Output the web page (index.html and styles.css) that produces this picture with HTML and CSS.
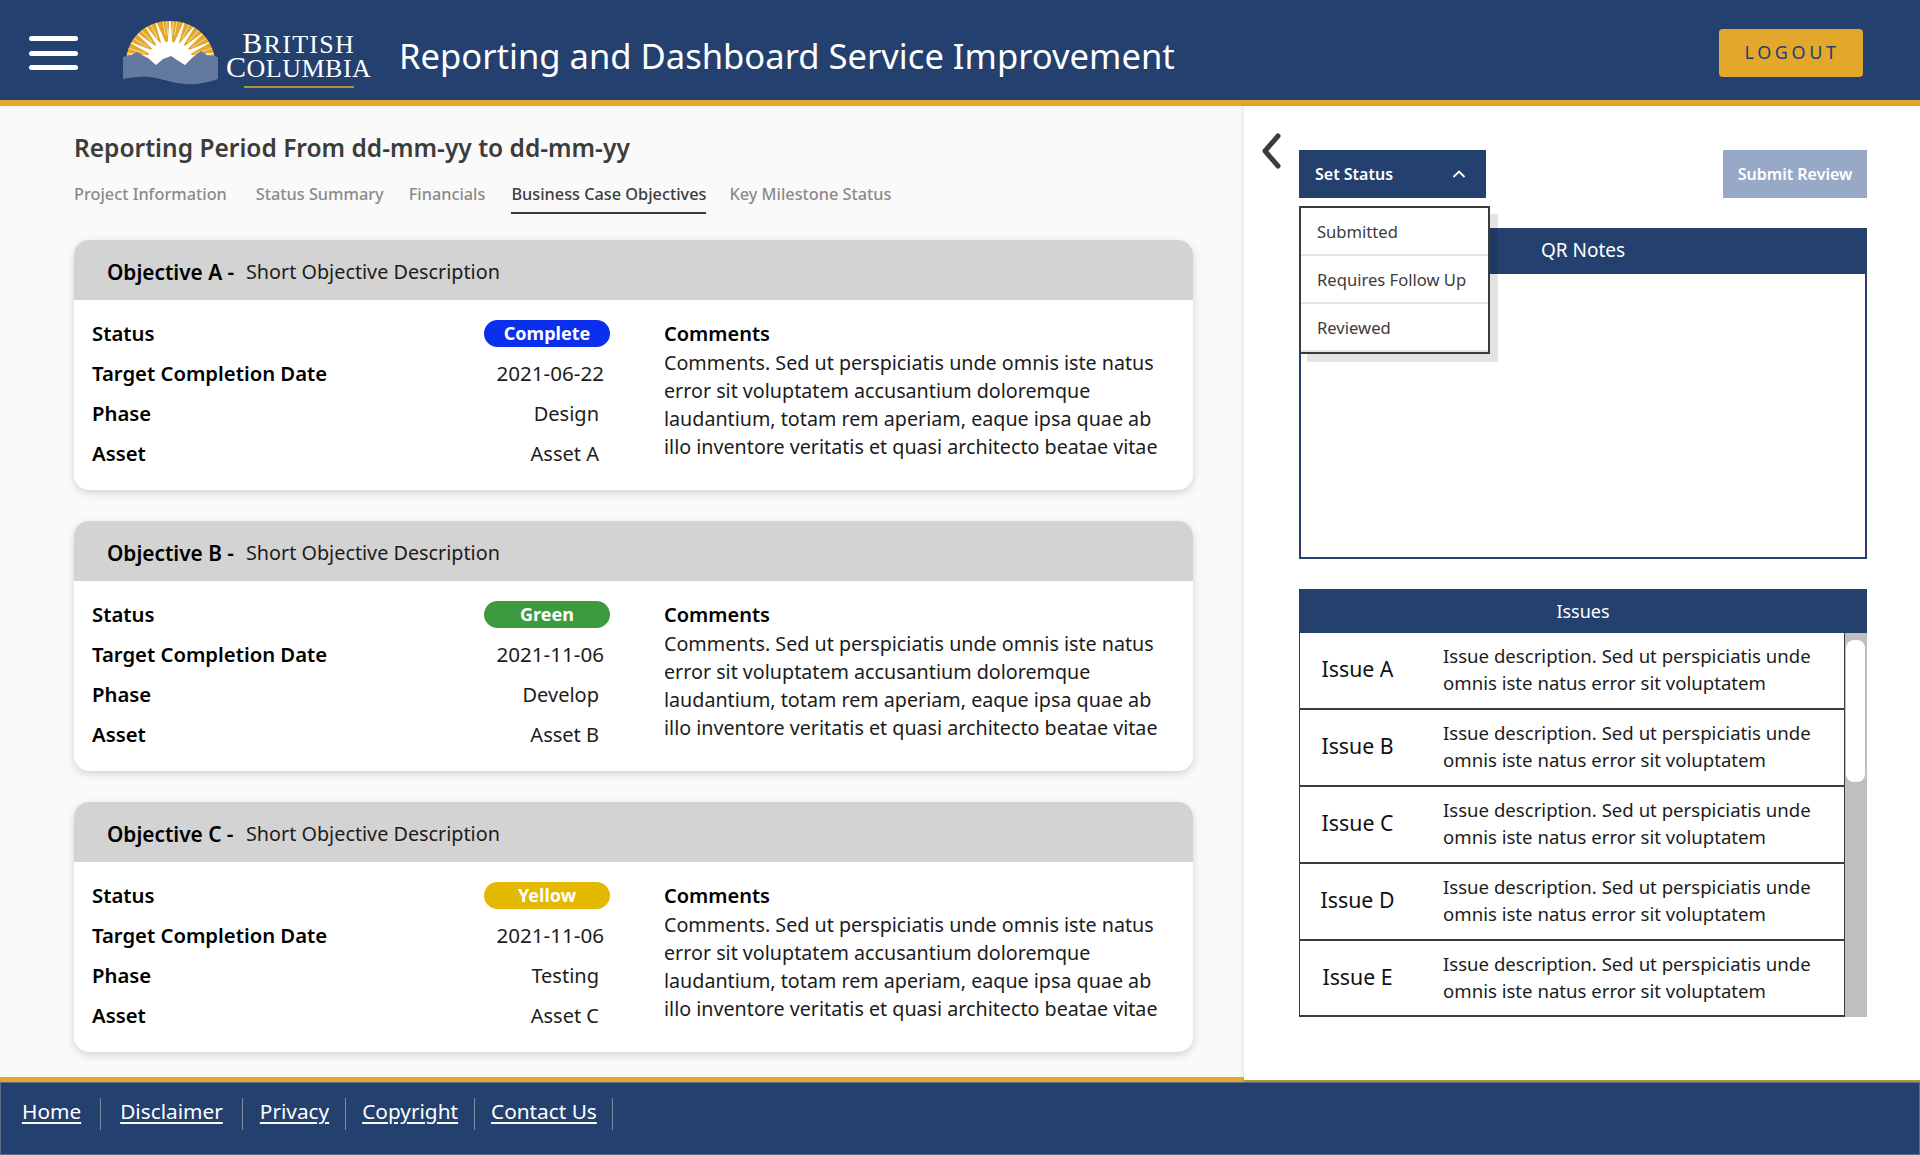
FILE: index.html
```html
<!DOCTYPE html>
<html lang="en">
<head>
<meta charset="utf-8">
<title>Reporting and Dashboard Service Improvement</title>
<link rel="stylesheet" href="styles.css">
</head>
<body>
<header class="topbar">
  <button class="burger" aria-label="Menu"><span></span><span></span><span></span></button>
  <div class="logo">
    <svg class="logo-mark" viewBox="0 0 95 64" width="95" height="64">
      <defs>
        <clipPath id="dome"><path d="M3 37 C7 13 25 0 47 0 C69 0 87 13 92 37 Z"/></clipPath>
        <path id="ray" d="M14 -2.6 L46 -0.25 L46 0.25 L14 2.6 Z" fill="#fff"/>
        <path id="fine" d="M26 -0.35 L50 -0.35 L50 0.35 L26 0.35 Z" fill="#fff" opacity=".75"/>
      </defs>
      <path d="M3 37 C7 13 25 0 47 0 C69 0 87 13 92 37 Z" fill="#e3a82b"/>
      <g clip-path="url(#dome)">
        <g transform="translate(47 40)">
          <use href="#ray" transform="rotate(-170)"/><use href="#ray" transform="rotate(-155)"/><use href="#ray" transform="rotate(-140)"/><use href="#ray" transform="rotate(-125)"/><use href="#ray" transform="rotate(-110)"/><use href="#ray" transform="rotate(-90)"/><use href="#ray" transform="rotate(-70)"/><use href="#ray" transform="rotate(-55)"/><use href="#ray" transform="rotate(-40)"/><use href="#ray" transform="rotate(-25)"/><use href="#ray" transform="rotate(-10)"/>
          <use href="#fine" transform="rotate(-163)"/><use href="#fine" transform="rotate(-148)"/><use href="#fine" transform="rotate(-133)"/><use href="#fine" transform="rotate(-118)"/><use href="#fine" transform="rotate(-100)"/><use href="#fine" transform="rotate(-95)"/><use href="#fine" transform="rotate(-85)"/><use href="#fine" transform="rotate(-80)"/><use href="#fine" transform="rotate(-62)"/><use href="#fine" transform="rotate(-47)"/><use href="#fine" transform="rotate(-32)"/><use href="#fine" transform="rotate(-17)"/>
        </g>
      </g>
      <path d="M25 38 C25 27 35 21 47 21 C59 21 69 27 69 38 L69 46 L25 46 Z" fill="#fff"/>
      <path d="M0 36 L8 34 L14 31 L19 34 L25 37 L33 44 L40 38 L48 35 L54 39 L62 44 L70 36 L78 30 L84 34 L95 36 L95 58 C84 62 72 64 62 63 C48 62 38 57 26 56 C16 55 8 57 0 58 Z" fill="#64799f"/>
    </svg>
    <div class="logo-word">
      <span class="logo-l1"><span class="cap">B</span>RITISH</span>
      <span class="logo-l2"><span class="cap">C</span>OLUMBIA</span>
      <span class="logo-rule"></span>
    </div>
  </div>
  <h1 class="app-title">Reporting and Dashboard Service Improvement</h1>
  <button class="logout">LOGOUT</button>
</header>

<div class="main">
  <main class="left">
    <h2 class="period">Reporting Period From dd-mm-yy to dd-mm-yy</h2>
    <nav class="tabs">
      <a class="tab t1">Project Information</a>
      <a class="tab t2">Status Summary</a>
      <a class="tab t3">Financials</a>
      <a class="tab active t4">Business Case Objectives</a>
      <a class="tab">Key Milestone Status</a>
    </nav>

    <section class="card">
      <div class="card-head"><b>Objective A -</b><span>Short Objective Description</span></div>
      <div class="card-body">
        <dl class="facts">
          <dt>Status</dt><dd class="pill-cell"><span class="pill blue">Complete</span></dd>
          <dt>Target Completion Date</dt><dd class="date">2021-06-22</dd>
          <dt>Phase</dt><dd>Design</dd>
          <dt>Asset</dt><dd>Asset A</dd>
        </dl>
        <div class="comments"><b>Comments</b><p>Comments. Sed ut perspiciatis unde omnis iste natus error sit voluptatem accusantium doloremque laudantium, totam rem aperiam, eaque ipsa quae ab illo inventore veritatis et quasi architecto beatae vitae</p></div>
      </div>
    </section>

    <section class="card">
      <div class="card-head"><b>Objective B -</b><span>Short Objective Description</span></div>
      <div class="card-body">
        <dl class="facts">
          <dt>Status</dt><dd class="pill-cell"><span class="pill green">Green</span></dd>
          <dt>Target Completion Date</dt><dd class="date">2021-11-06</dd>
          <dt>Phase</dt><dd>Develop</dd>
          <dt>Asset</dt><dd>Asset B</dd>
        </dl>
        <div class="comments"><b>Comments</b><p>Comments. Sed ut perspiciatis unde omnis iste natus error sit voluptatem accusantium doloremque laudantium, totam rem aperiam, eaque ipsa quae ab illo inventore veritatis et quasi architecto beatae vitae</p></div>
      </div>
    </section>

    <section class="card">
      <div class="card-head"><b>Objective C -</b><span>Short Objective Description</span></div>
      <div class="card-body">
        <dl class="facts">
          <dt>Status</dt><dd class="pill-cell"><span class="pill yellow">Yellow</span></dd>
          <dt>Target Completion Date</dt><dd class="date">2021-11-06</dd>
          <dt>Phase</dt><dd>Testing</dd>
          <dt>Asset</dt><dd>Asset C</dd>
        </dl>
        <div class="comments"><b>Comments</b><p>Comments. Sed ut perspiciatis unde omnis iste natus error sit voluptatem accusantium doloremque laudantium, totam rem aperiam, eaque ipsa quae ab illo inventore veritatis et quasi architecto beatae vitae</p></div>
      </div>
    </section>
  </main>

  <aside class="right">
    <svg class="back" viewBox="0 0 20 36" width="20" height="36"><path d="M17 3 L4 18 L17 33" fill="none" stroke="#3c3c3c" stroke-width="5" stroke-linecap="round" stroke-linejoin="round"/></svg>
    <div class="right-col">
      <div class="actions">
        <div class="status-wrap">
          <button class="set-status">Set Status
            <svg viewBox="0 0 14 8" width="14" height="8"><path d="M1.5 7 L7 1.5 L12.5 7" fill="none" stroke="#fff" stroke-width="1.8"/></svg>
          </button>
          <ul class="menu">
            <li>Submitted</li>
            <li>Requires Follow Up</li>
            <li>Reviewed</li>
          </ul>
        </div>
        <button class="submit">Submit Review</button>
      </div>
      <section class="notes">
        <h3>QR Notes</h3>
        <div class="notes-body"></div>
      </section>
      <section class="issues">
        <h3>Issues</h3>
        <div class="issue-wrap">
          <div class="issue-list">
            <div class="issue"><div class="issue-name">Issue A</div><p>Issue description. Sed ut perspiciatis unde omnis iste natus error sit voluptatem</p></div>
            <div class="issue"><div class="issue-name">Issue B</div><p>Issue description. Sed ut perspiciatis unde omnis iste natus error sit voluptatem</p></div>
            <div class="issue"><div class="issue-name">Issue C</div><p>Issue description. Sed ut perspiciatis unde omnis iste natus error sit voluptatem</p></div>
            <div class="issue"><div class="issue-name">Issue D</div><p>Issue description. Sed ut perspiciatis unde omnis iste natus error sit voluptatem</p></div>
            <div class="issue"><div class="issue-name">Issue E</div><p>Issue description. Sed ut perspiciatis unde omnis iste natus error sit voluptatem</p></div>
          </div>
          <div class="scrollbar"><div class="thumb"></div></div>
        </div>
      </section>
    </div>
  </aside>
</div>

<footer class="footer">
  <a class="f-home">Home</a><a class="f-disc">Disclaimer</a><a class="f-priv">Privacy</a><a class="f-copy">Copyright</a><a class="f-cont">Contact Us</a>
</footer>
</body>
</html>
```
FILE: styles.css
```css
* { box-sizing: border-box; }
html, body { margin: 0; height: 100%; }
body {
  height: 1155px;
  overflow: hidden;
  display: flex;
  flex-direction: column;
  font-family: "Noto Sans", sans-serif;
  color: #000;
  background: #fafafa;
}
h1, h2, h3, p, ul, dl, dd { margin: 0; padding: 0; }
button { font-family: inherit; border: 0; cursor: pointer; }

.topbar {
  height: 106px;
  flex: none;
  background: #23406f;
  border-bottom: 6px solid #e3a82b;
  display: flex;
  align-items: center;
  padding: 6px 57px 0 29px;
}
.burger {
  width: 49px;
  height: 34px;
  padding: 0;
  background: none;
  display: flex;
  flex-direction: column;
  justify-content: space-between;
  margin-right: 45px;
  flex: none;
}
.burger span { display: block; height: 5px; border-radius: 3px; background: #fff; }
.logo { display: flex; align-items: center; width: 276px; flex: none; }
.logo-mark { flex: none; }
.logo-word {
  margin-left: 8px;
  margin-top: 12px;
  color: #fff;
  font-family: "Liberation Serif", serif;
  display: flex;
  flex-direction: column;
  align-items: center;
}
.logo-l1, .logo-l2 { display: block; line-height: 24px; height: 24px; white-space: nowrap; }
.logo-l1 { font-size: 26px; letter-spacing: 1.3px; }
.logo-l2 { font-size: 26px; letter-spacing: .5px; }
.cap { font-size: 30px; }
.logo-rule { width: 110px; height: 2px; background: #b08f3d; margin-top: 7px; }
.app-title { font-size: 34.6px; font-weight: 400; color: #fff; flex: 1; white-space: nowrap; margin-top: 4px; }
.logout {
  width: 144px;
  height: 48px;
  background: #e3a82b;
  color: #23406f;
  font-size: 18px;
  letter-spacing: 3.6px;
  border-radius: 4px;
  padding: 0 0 2px 2px;
}

.main { flex: 1; display: flex; min-height: 0; }
.left { width: 1244px; flex: none; padding: 26px 51px 0 74px; background: #fafafa; }
.period { font-size: 24.5px; font-weight: 600; color: #3c3c3c; line-height: 32px; }
.tabs { display: flex; margin-top: 15px; margin-bottom: 18px; height: 43px; }
.tab { font-size: 16.3px; font-weight: 500; color: #8a8a8a; line-height: 30px; height: 35px; white-space: nowrap; }
.t1 { margin-right: 29px; }
.t2 { margin-right: 25px; }
.t3 { margin-right: 26px; }
.t4 { margin-right: 23px; }
.tab.active { color: #3c3c3c; border-bottom: 2px solid #3c3c3c; }

.card {
  height: 250px;
  margin-bottom: 31px;
  background: #fff;
  border-radius: 15px;
  box-shadow: 0 3px 8px rgba(0,0,0,.16);
  overflow: hidden;
}
.card-head {
  height: 60px;
  background: #d3d3d3;
  display: flex;
  align-items: center;
  padding: 3px 0 0 33px;
  font-size: 19.8px;
  color: #1c1c1c;
}
.card-head b { font-size: 20.8px; font-weight: 600; color: #000; width: 139px; flex: none; }
.card-body { display: flex; padding: 13px 30px 0 18px; }
.facts {
  width: 572px;
  flex: none;
  display: grid;
  grid-template-columns: 1fr auto;
  grid-auto-rows: 40px;
  align-items: center;
  font-size: 20px;
}
.facts dt { font-weight: 600; font-size: 20.3px; }
.facts dd { justify-self: end; padding-right: 65px; color: #1c1c1c; }
.facts .date { padding-right: 60px; font-size: 20.6px; }
.facts .pill-cell { padding-right: 54px; }
.pill {
  display: flex;
  align-items: center;
  justify-content: center;
  width: 126px;
  height: 27px;
  border-radius: 14px;
  color: #fff;
  font-size: 18px;
  font-weight: 700;
}
.blue { background: #0a30ee; }
.green { background: #3e9a3e; }
.yellow { background: #e3b800; }
.comments { flex: 1; font-size: 19.7px; line-height: 28px; color: #1c1c1c; padding-top: 7px; }
.comments b { font-size: 20px; font-weight: 600; color: #000; display: block; margin-bottom: 1px; }

.right {
  flex: 1;
  background: #fff;
  display: flex;
  box-shadow: -2px 0 4px rgba(0,0,0,.08), 0 2px 0 #c4962a;
  position: relative;
  z-index: 1;
  margin-bottom: -3px;
  padding: 44px 53px 0 17px;
}
.back { flex: none; margin-top: -17px; margin-left: 0; }
.right-col { margin-left: 18px; flex: 1; display: flex; flex-direction: column; }
.actions { display: flex; justify-content: space-between; height: 48px; }
.status-wrap { position: relative; }
.set-status {
  width: 187px;
  height: 48px;
  background: #23406f;
  color: #fff;
  font-size: 16px;
  font-weight: 600;
  display: flex;
  align-items: center;
  justify-content: space-between;
  padding: 0 20px 0 16px;
}
.menu {
  position: absolute;
  left: 0;
  top: 56px;
  width: 191px;
  height: 148px;
  background: #fff;
  border: 2px solid #3c3c3c;
  box-shadow: 8px 8px 0 rgba(0,0,0,.11);
  list-style: none;
  z-index: 2;
}
.menu li {
  height: 48px;
  border-bottom: 2px solid #e3e3e3;
  font-size: 16.6px;
  color: #3c3c3c;
  display: flex;
  align-items: center;
  padding: 0 0 0 16px;
}
.submit {
  width: 144px;
  height: 48px;
  background: #98a9c8;
  color: #fff;
  font-size: 16px;
  font-weight: 600;
}
.notes { margin-top: 30px; height: 331px; display: flex; flex-direction: column; }
.notes h3, .issues h3 {
  font-weight: 400;
  color: #fff;
  background: #23406f;
  text-align: center;
  flex: none;
}
.notes h3 { height: 46px; line-height: 44px; font-size: 19px; }
.notes-body { flex: 1; border: 2px solid #23406f; border-top: 0; background: #fff; }
.issues { margin-top: 30px; }
.issues h3 { height: 44px; line-height: 44px; font-size: 18px; }
.issue-wrap { display: flex; height: 384px; }
.issue-list { flex: 1; border-left: 1px solid #3c3c3c; border-right: 1px solid #3c3c3c; border-bottom: 2px solid #3c3c3c; }
.issue { height: 77px; display: flex; align-items: center; border-bottom: 2px solid #3c3c3c; }
.issue:last-child { height: 75px; border-bottom: 0; }
.issue-name { width: 143px; flex: none; font-size: 21.3px; text-align: center; padding: 0 28px 4px 0; color: #111; }
.issue p { font-size: 18.6px; line-height: 27px; color: #1c1c1c; width: 390px; margin-top: -3px; }
.scrollbar { width: 22px; flex: none; background: #bfbfbf; padding: 7px 2px 0 1px; }
.thumb { height: 142px; background: #fff; border-radius: 8px; }

.footer {
  flex: none;
  height: 78px;
  background: #23406f;
  border-top: 5px solid #e3a82b;
  box-shadow: inset 0 0 0 1px #5d6d85;
  padding: 16px 0 0 6px;
  display: flex;
  align-items: flex-start;
  font-size: 20.8px;
}
.footer a {
  color: #fff;
  text-decoration: underline;
  text-underline-offset: 3px;
  height: 32px;
  line-height: 26px;
  border-right: 1px solid #7d8aa0;
  white-space: nowrap;
}
.f-home { padding: 0 19px 0 16px; }
.f-disc { padding: 0 19px 0 19px; }
.f-priv { padding: 0 16px 0 17px; }
.f-copy { padding: 0 16px 0 16px; }
.f-cont { padding: 0 15px 0 16px; }
```
